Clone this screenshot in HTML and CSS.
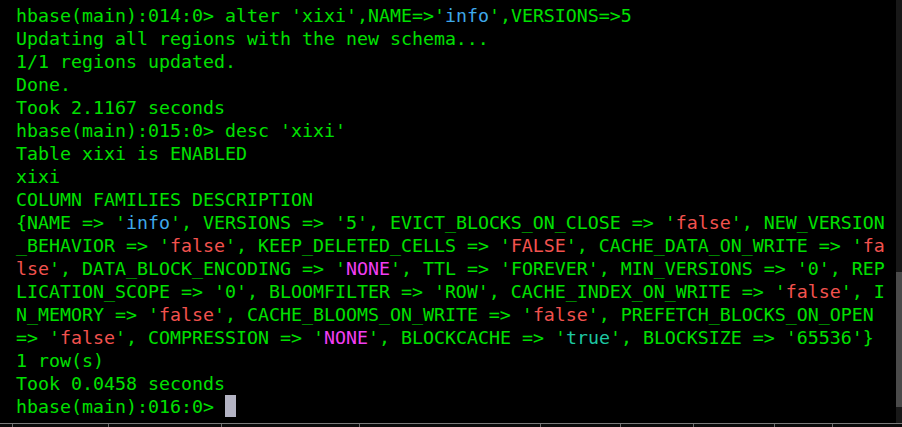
FILE: index.html
```html
<!DOCTYPE html>
<html>
<head>
<meta charset="utf-8">
<link rel="stylesheet" href="styles.css">
</head>
<body>
<div class="window">
  <div class="main">
    <div class="term">
      <div class="ln">hbase(main):014:0&gt; alter 'xixi',NAME=&gt;'<span class="b">info</span>',VERSIONS=&gt;5</div>
      <div class="ln">Updating all regions with the new schema...</div>
      <div class="ln">1/1 regions updated.</div>
      <div class="ln">Done.</div>
      <div class="ln">Took 2.1167 seconds</div>
      <div class="ln">hbase(main):015:0&gt; desc 'xixi'</div>
      <div class="ln">Table xixi is ENABLED</div>
      <div class="ln">xixi</div>
      <div class="ln">COLUMN FAMILIES DESCRIPTION</div>
      <div class="ln">{NAME =&gt; '<span class="b">info</span>', VERSIONS =&gt; '5', EVICT_BLOCKS_ON_CLOSE =&gt; '<span class="r">false</span>', NEW_VERSION</div>
      <div class="ln">_BEHAVIOR =&gt; '<span class="r">false</span>', KEEP_DELETED_CELLS =&gt; '<span class="r">FALSE</span>', CACHE_DATA_ON_WRITE =&gt; '<span class="r">fa</span></div>
      <div class="ln"><span class="r">lse</span>', DATA_BLOCK_ENCODING =&gt; '<span class="m">NONE</span>', TTL =&gt; 'FOREVER', MIN_VERSIONS =&gt; '0', REP</div>
      <div class="ln">LICATION_SCOPE =&gt; '0', BLOOMFILTER =&gt; 'ROW', CACHE_INDEX_ON_WRITE =&gt; '<span class="r">false</span>', I</div>
      <div class="ln">N_MEMORY =&gt; '<span class="r">false</span>', CACHE_BLOOMS_ON_WRITE =&gt; '<span class="r">false</span>', PREFETCH_BLOCKS_ON_OPEN</div>
      <div class="ln">=&gt; '<span class="r">false</span>', COMPRESSION =&gt; '<span class="m">NONE</span>', BLOCKCACHE =&gt; '<span class="t">true</span>', BLOCKSIZE =&gt; '65536'}</div>
      <div class="ln">1 row(s)</div>
      <div class="ln">Took 0.0458 seconds</div>
      <div class="ln">hbase(main):016:0&gt; <span class="cursor"></span></div>
    </div>
    <div class="scroll"><div class="thumb"></div></div>
  </div>
  <div class="status">
    <span class="seg s1"></span><span class="seg s2"></span><span class="seg s3"></span><span class="seg s4"></span><span class="seg s5"></span><span class="seg s6"></span><span class="seg s7"></span><span class="seg s8"></span><span class="seg s9"></span><span class="seg s10"></span>
  </div>
</div>
</body>
</html>
```

FILE: styles.css
```css
html, body {
  margin: 0;
  padding: 0;
  background: #000;
}
.window {
  width: 902px;
  height: 427px;
  display: flex;
  flex-direction: column;
  overflow: hidden;
  background: #000;
}
.main {
  display: flex;
  height: 423px;
}
.term {
  flex: 1;
  padding: 4px 0 0 16px;
  font-family: "DejaVu Sans Mono", monospace;
  font-size: 18.27px;
  line-height: 23px;
  color: #00e000;
  overflow: hidden;
}
.ln {
  height: 23px;
  white-space: pre;
}
.b { color: #3ea8ea; }
.r { color: #f2524e; }
.m { color: #f23ef2; }
.t { color: #1ec8a2; }
.cursor {
  display: inline-block;
  width: 11px;
  height: 22px;
  vertical-align: top;
  background: #b3b3c3;
}
.scroll {
  width: 6px;
  background: #181818;
  display: flex;
  flex-direction: column;
  justify-content: flex-end;
  padding-bottom: 16px;
}
.thumb {
  height: 135px;
  background: #4a4a4a;
}
.status {
  height: 3px;
  border-top: 1px solid #7a7a7a;
  display: flex;
  background: #0a0a0a;
}
.seg {
  height: 3px;
  border-left: 1px solid #6a6a6a;
}
.s1 { width: 12px; border-left: none; }
.s2 { width: 95px; }
.s3 { width: 112px; }
.s4 { width: 137px; }
.s5 { width: 180px; }
.s6 { width: 79px; }
.s7 { width: 72px; }
.s8 { width: 80px; }
.s9 { width: 57px; }
.s10 { width: 56px; }
```
